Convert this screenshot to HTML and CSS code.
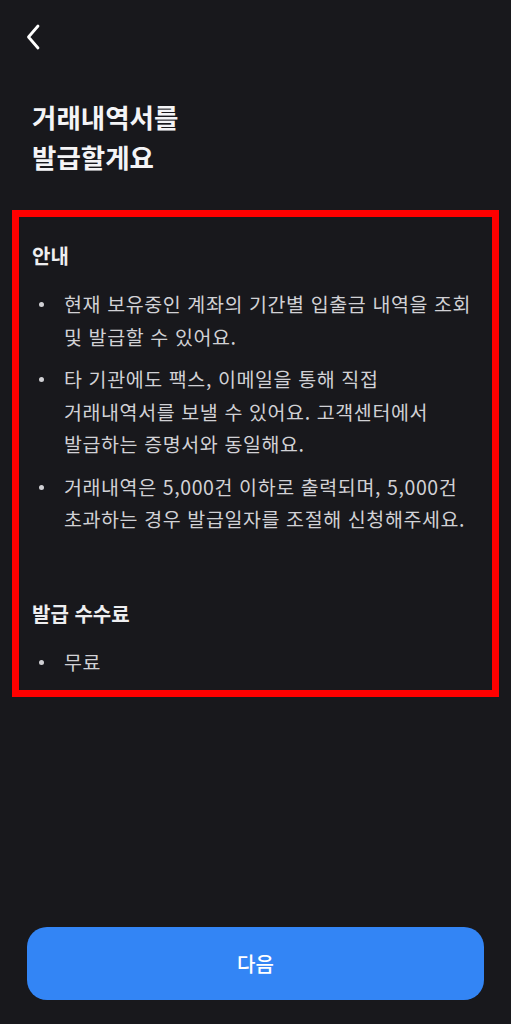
FILE: index.html
```html
<!DOCTYPE html>
<html lang="ko">
<head>
<meta charset="utf-8">
<title>거래내역서 발급</title>
<link rel="stylesheet" href="styles.css">
</head>
<body>
<div class="screen">
  <header class="topbar">
    <button class="back" aria-label="뒤로">
      <svg width="24" height="30" viewBox="0 0 24 30"><path d="M13 4 L3.5 15 L13 26" fill="none" stroke="#ffffff" stroke-width="2.8" stroke-linecap="round" stroke-linejoin="round"/></svg>
    </button>
  </header>
  <h1 class="title">거래내역서를<br>발급할게요</h1>
  <section class="notice">
    <h2 class="heading">안내</h2>
    <ul class="list">
      <li class="item"><span class="dot"></span><span class="text">현재 보유중인 계좌의 기간별 입출금 내역을 조회<br>및 발급할 수 있어요.</span></li>
      <li class="item"><span class="dot"></span><span class="text">타 기관에도 팩스, 이메일을 통해 직접<br>거래내역서를 보낼 수 있어요. 고객센터에서<br>발급하는 증명서와 동일해요.</span></li>
      <li class="item"><span class="dot"></span><span class="text">거래내역은 5,000건 이하로 출력되며, 5,000건<br>초과하는 경우 발급일자를 조절해 신청해주세요.</span></li>
    </ul>
    <h2 class="heading heading-fee">발급 수수료</h2>
    <ul class="list">
      <li class="item"><span class="dot"></span><span class="text">무료</span></li>
    </ul>
  </section>
  <div class="footer">
    <button class="next">다음</button>
  </div>
</div>
</body>
</html>
```
FILE: styles.css
```css
* { box-sizing: border-box; }
html, body { margin: 0; padding: 0; background: #18181c; }
body {
  font-family: "Noto Sans CJK KR", "Noto Sans", sans-serif;
  color: #d1d1d5;
}
.screen {
  min-height: 1024px;
  display: flex;
  flex-direction: column;
}
.topbar {
  height: 74px;
  display: flex;
  align-items: center;
  padding-left: 25px;
}
.back {
  background: none;
  border: 0;
  padding: 0;
  width: 24px;
  height: 30px;
  display: flex;
}
.title {
  margin: 23px 0 0 32px;
  font-size: 26.5px;
  line-height: 40px;
  font-weight: 700;
  color: #f4f4f6;
  letter-spacing: 0;
}
.notice {
  margin: 33px 12px 0 12px;
  border: 7px solid #ff0000;
  padding: 26px 13px 12px 13px;
}
.heading {
  margin: 0;
  font-size: 20px;
  line-height: 26px;
  font-weight: 700;
  color: #eeeef0;
}
.heading-fee { margin-top: 65px; }
.list {
  list-style: none;
  margin: 19px 0 0 0;
  padding: 0;
  display: flex;
  flex-direction: column;
  gap: 10px;
}
.item {
  display: flex;
  align-items: flex-start;
  font-size: 19.5px;
  line-height: 32.5px;
  word-break: keep-all;
}
.dot {
  flex: none;
  width: 5px;
  height: 5px;
  border-radius: 50%;
  background: #d0d0d4;
  margin: 14px 20px 0 7px;
}
.text { flex: 1; letter-spacing: 0.6px; white-space: nowrap; }
.footer {
  margin-top: auto;
  padding: 0 27px 24px 27px;
}
.next {
  width: 100%;
  height: 73px;
  border: 0;
  border-radius: 20px;
  background: #3385f5;
  color: #ffffff;
  font-family: "Noto Sans CJK KR", "Noto Sans", sans-serif;
  font-size: 20px;
  font-weight: 500;
}
```
